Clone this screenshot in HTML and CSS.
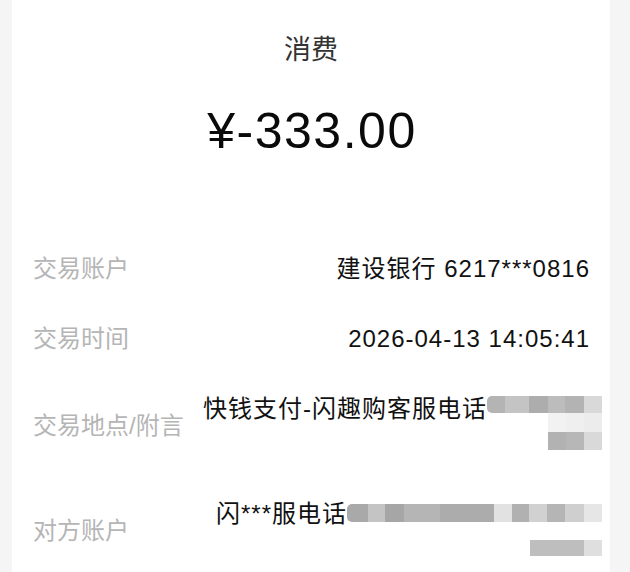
FILE: index.html
```html
<!DOCTYPE html>
<html lang="zh-CN">
<head>
<meta charset="utf-8">
<title>消费</title>
<link rel="stylesheet" href="styles.css">
</head>
<body>
<main class="card">
  <div class="title">消费</div>
  <div class="amount">¥-333.00</div>
  <section class="rows">
    <div class="row">
      <div class="label">交易账户</div>
      <div class="value"><div class="vline">建设银行 6217***0816</div></div>
    </div>
    <div class="row">
      <div class="label">交易时间</div>
      <div class="value"><div class="vline">2026-04-13 14:05:41</div></div>
    </div>
    <div class="row">
      <div class="label">交易地点/附言</div>
      <div class="value">
        <div class="vline">快钱支付-闪趣购客服电话<span class="mosaic m-a"><i class="c1 first"></i><i class="c2"></i><i class="c3"></i><i class="c4"></i><i class="c5"></i><i class="c6"></i></span></div>
        <div class="vline"><span class="mosaic m-b"><i class="t"></i><i class="f1"></i><i class="f2"></i><i class="f3"></i><i class="t"></i><i class="c7"></i><i class="c8"></i><i class="c6"></i></span></div>
      </div>
    </div>
    <div class="row">
      <div class="label">对方账户</div>
      <div class="value">
        <div class="vline">闪***服电话<span class="mosaic m-c"><i class="d1 first"></i><i class="d2"></i><i class="d3"></i><i class="d4"></i><i class="d5"></i><i class="d6"></i><i class="d7"></i><i class="d8"></i><i class="d9"></i><i class="d10"></i><i class="d11"></i></span></div>
        <div class="vline"><span class="mosaic m-d"><i class="e1"></i><i class="e2"></i></span></div>
      </div>
    </div>
  </section>
</main>
</body>
</html>
```

FILE: styles.css
```css
html, body {
  margin: 0;
  padding: 0;
  background: #f5f5f5;
}
body {
  font-family: "Liberation Sans", "Noto Sans CJK SC", sans-serif;
  width: 630px;
  height: 572px;
  overflow: hidden;
}
.card {
  margin: 0 20px 0 12px;
  background: #ffffff;
  height: 572px;
  overflow: hidden;
}
.title {
  padding-top: 31px;
  text-align: center;
  font-size: 27px;
  line-height: 38px;
  color: #333333;
}
.amount {
  margin-top: 32px;
  text-align: center;
  font-size: 50px;
  line-height: 60px;
  letter-spacing: 1.5px;
  color: #0a0a0a;
  padding-left: 2px;
}
.rows {
  margin-top: 72px;
  padding: 0 20px 0 21px;
}
.row {
  display: flex;
  justify-content: space-between;
  align-items: center;
  padding: 17.5px 0;
}
.label {
  font-size: 24px;
  line-height: 35px;
  color: #b5b5b5;
  white-space: nowrap;
}
.value {
  display: flex;
  flex-direction: column;
  align-items: flex-end;
  font-size: 24px;
  letter-spacing: 1px;
  color: #111111;
}
.vline {
  display: flex;
  align-items: flex-start;
  justify-content: flex-end;
  height: 35px;
  line-height: 35px;
  white-space: nowrap;
}
.mosaic {
  display: grid;
  margin-right: -12px;
}
.mosaic i {
  display: block;
}
.mosaic i.first {
  border-radius: 5px 0 0 5px;
}
.m-a {
  margin-top: 5.5px;
  height: 17px;
  grid-template-columns: 18px 24px 19px 17px 19px 18px;
}
.m-b {
  margin-top: -12.5px;
  grid-template-columns: 8px 18px 18px 18px;
  grid-template-rows: 19px 18px;
}
.m-c {
  margin-top: 8.5px;
  height: 18px;
  grid-template-columns: 21px 17px 19px 36px 54px 18px 17px 18px 18px 19px 18px;
}
.m-d {
  margin-top: 9.5px;
  height: 16px;
  grid-template-columns: 54px 18px;
}
.c1 { background: #b4b4b4; }
.c2 { background: #c4c4c4; }
.c3 { background: #adadad; }
.c4 { background: #bcbcbc; }
.c5 { background: #b3b3b3; }
.c6 { background: #d9d9d9; }
.c7 { background: #b2b2b2; }
.c8 { background: #b7b7b7; }
.t { background: transparent; }
.f1 { background: #f2f2f2; }
.f2 { background: #efefef; }
.f3 { background: #ececec; }
.d1 { background: #a9a9a9; }
.d2 { background: #c4c4c4; }
.d3 { background: #a6a6a6; }
.d4 { background: #b5b5b5; }
.d5 { background: #acacac; }
.d6 { background: #e2e2e2; }
.d7 { background: #b1b1b1; }
.d8 { background: #d1d1d1; }
.d9 { background: #b5b5b5; }
.d10 { background: #cfcfcf; }
.d11 { background: #e6e6e6; }
.e1 { background: #bebebe; }
.e2 { background: #dfdfdf; }
```
